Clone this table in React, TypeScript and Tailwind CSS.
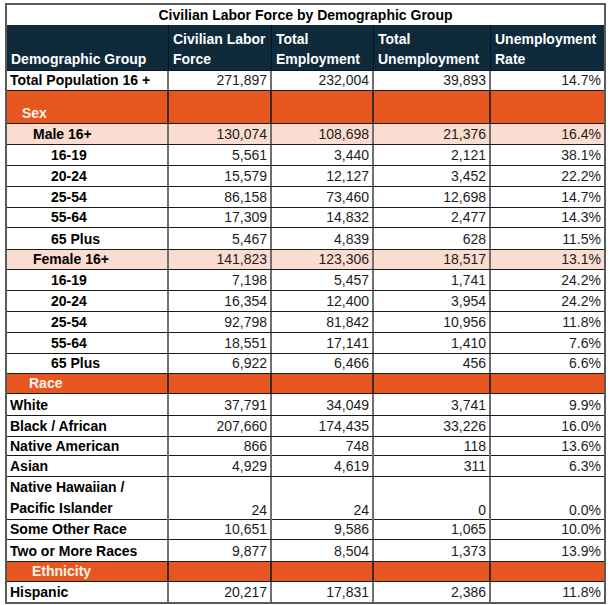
import React from "react";

type Kind = "plain" | "section" | "sub" | "age";

type Row = {
  label: string;
  kind: Kind;
  h: string;
  indent?: string;
  values?: string[];
  label2?: string;
};

const rows: Row[] = [
  { label: "Total Population 16 +", kind: "plain", h: "h-[20px]", values: ["271,897", "232,004", "39,893", "14.7%"] },
  { label: "Sex", kind: "section", h: "h-[33px]", indent: "pl-[15px]" },
  { label: "Male 16+", kind: "sub", h: "h-[21px]", values: ["130,074", "108,698", "21,376", "16.4%"] },
  { label: "16-19", kind: "age", h: "h-[21px]", values: ["5,561", "3,440", "2,121", "38.1%"] },
  { label: "20-24", kind: "age", h: "h-[21px]", values: ["15,579", "12,127", "3,452", "22.2%"] },
  { label: "25-54", kind: "age", h: "h-[21px]", values: ["86,158", "73,460", "12,698", "14.7%"] },
  { label: "55-64", kind: "age", h: "h-[20px]", values: ["17,309", "14,832", "2,477", "14.3%"] },
  { label: "65 Plus", kind: "age", h: "h-[22px]", values: ["5,467", "4,839", "628", "11.5%"] },
  { label: "Female 16+", kind: "sub", h: "h-[20px]", values: ["141,823", "123,306", "18,517", "13.1%"] },
  { label: "16-19", kind: "age", h: "h-[21px]", values: ["7,198", "5,457", "1,741", "24.2%"] },
  { label: "20-24", kind: "age", h: "h-[21px]", values: ["16,354", "12,400", "3,954", "24.2%"] },
  { label: "25-54", kind: "age", h: "h-[21px]", values: ["92,798", "81,842", "10,956", "11.8%"] },
  { label: "55-64", kind: "age", h: "h-[21px]", values: ["18,551", "17,141", "1,410", "7.6%"] },
  { label: "65 Plus", kind: "age", h: "h-[20px]", values: ["6,922", "6,466", "456", "6.6%"] },
  { label: "Race", kind: "section", h: "h-[20px]", indent: "pl-[22px]" },
  { label: "White", kind: "plain", h: "h-[22px]", values: ["37,791", "34,049", "3,741", "9.9%"] },
  { label: "Black / African", kind: "plain", h: "h-[21px]", values: ["207,660", "174,435", "33,226", "16.0%"] },
  { label: "Native American", kind: "plain", h: "h-[19px]", values: ["866", "748", "118", "13.6%"] },
  { label: "Asian", kind: "plain", h: "h-[21px]", values: ["4,929", "4,619", "311", "6.3%"] },
  { label: "Native Hawaiian /", label2: "Pacific Islander", kind: "plain", h: "h-[43px]", values: ["24", "24", "0", "0.0%"] },
  { label: "Some Other Race", kind: "plain", h: "h-[20px]", values: ["10,651", "9,586", "1,065", "10.0%"] },
  { label: "Two or More Races", kind: "plain", h: "h-[22px]", values: ["9,877", "8,504", "1,373", "13.9%"] },
  { label: "Ethnicity", kind: "section", h: "h-[20px]", indent: "pl-[25px]" },
  { label: "Hispanic", kind: "plain", h: "h-[20px]", values: ["20,217", "17,831", "2,386", "11.8%"] },
];

const cols = "grid grid-cols-[162px_103px_102px_117px_113px]";

function rowBg(kind: Kind) {
  if (kind === "section") return "bg-[#e8561f]";
  if (kind === "sub") return "bg-[#fbdcd1]";
  return "bg-white";
}

function labelIndent(row: Row) {
  if (row.indent) return row.indent;
  if (row.kind === "sub") return "pl-[26px]";
  if (row.kind === "age") return "pl-[44px]";
  return "pl-[3px]";
}

function DataRow({ row, last }: { row: Row; last: boolean }) {
  const section = row.kind === "section";
  const vline = section ? "border-r-2 border-[#3a2a22]" : "border-r-2 border-[#707070]";
  return (
    <div className={`${cols} ${row.h} ${rowBg(row.kind)} ${last ? "" : "border-b border-[#1a1a1a]"}`}>
      <div
        className={`flex flex-col justify-end ${vline} ${labelIndent(row)} pb-[1px] font-bold ${
          row.label2 ? "leading-[21px]" : "leading-[18px]"
        } ${section ? "text-[#fff3ec]" : "text-black"}`}
      >
        <span>{row.label}</span>
        {row.label2 && <span>{row.label2}</span>}
      </div>
      {[0, 1, 2, 3].map((i) => (
        <div
          key={i}
          className={`flex items-end justify-end pr-[3px] pb-[1px] leading-[18px] text-[#1c1c1c] ${i < 3 ? vline : ""}`}
        >
          {row.values ? row.values[i] : ""}
        </div>
      ))}
    </div>
  );
}

export default function App() {
  return (
    <div className="bg-white w-[610px] h-[605px] pt-[3px] pl-[5px] font-['Liberation_Sans',Arial,sans-serif] text-[14px]">
      <div className="w-[601px] border-2 border-[#5a5a5a]">
        {/* title */}
        <div className="h-[20px] flex items-end justify-center pb-[1px] font-bold leading-[18px] text-black">
          Civilian Labor Force by Demographic Group
        </div>

        {/* header */}
        <div className={`${cols} h-[46px] bg-[#0e2a3b] text-white font-bold leading-[20px] border-b border-[#0a1a24]`}>
          <div className="flex items-end pl-[4px] pb-[1px] border-r border-[#061520]">Demographic Group</div>
          <div className="flex flex-col justify-end pl-[4px] pb-[1px] border-r border-[#061520]">
            <span>Civilian Labor</span>
            <span>Force</span>
          </div>
          <div className="flex flex-col justify-end pl-[4px] pb-[1px] border-r border-[#061520]">
            <span>Total</span>
            <span>Employment</span>
          </div>
          <div className="flex flex-col justify-end pl-[4px] pb-[1px] border-r border-[#061520]">
            <span>Total</span>
            <span>Unemployment</span>
          </div>
          <div className="flex flex-col justify-end pl-[4px] pb-[1px]">
            <span>Unemployment</span>
            <span>Rate</span>
          </div>
        </div>

        {rows.map((row, i) => (
          <DataRow key={i} row={row} last={i === rows.length - 1} />
        ))}
      </div>
    </div>
  );
}
